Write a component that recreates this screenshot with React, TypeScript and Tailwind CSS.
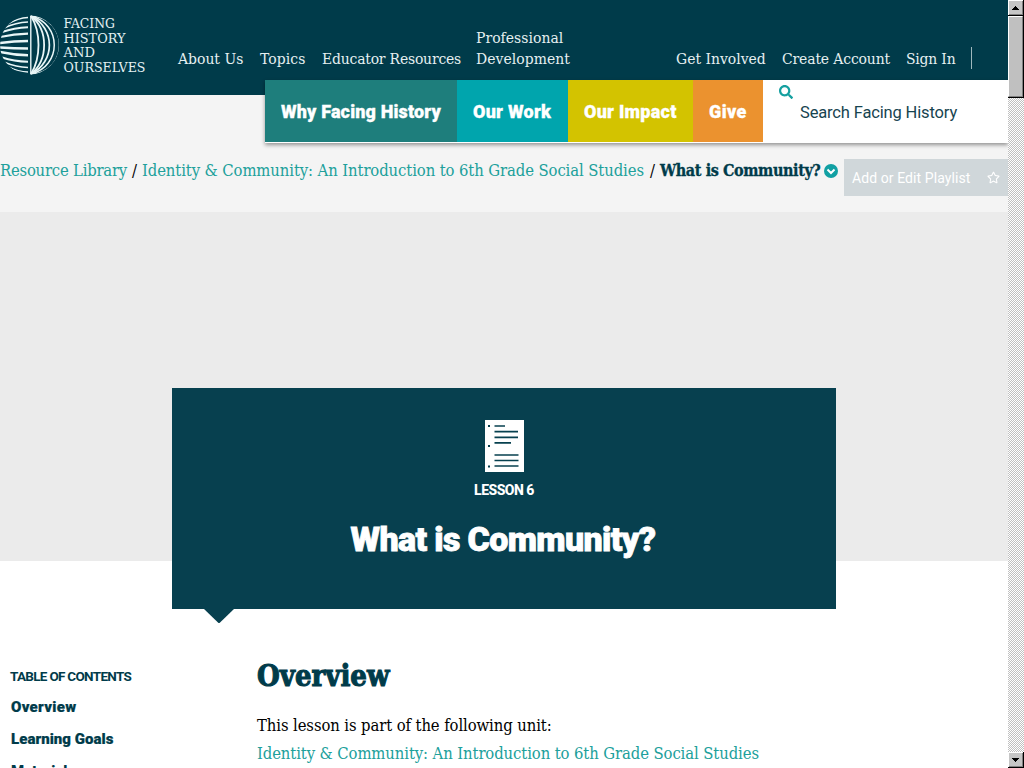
import React from "react";
import { FaSearch, FaRegStar } from "react-icons/fa";

const slab = "font-['DejaVu_Serif_Condensed','DejaVu_Serif',serif]";

function Logo() {
  return (
    <svg width="150" height="80" viewBox="0 0 150 80" className="block shrink-0">
      <defs>
        <clipPath id="globe"><circle cx="29.5" cy="45" r="29.5" /></clipPath>
        <clipPath id="west"><rect x="0" y="15" width="28" height="60" /></clipPath>
      </defs>
      <g clipPath="url(#globe)">
        <g clipPath="url(#west)" fill="none" stroke="#e9f6f7">
          <path strokeWidth="1.3" d="M28 17.5Q18 18 8 24" />
          <path strokeWidth="1.6" d="M28 22Q16 22.500 4 28" />
          <path strokeWidth="1.9" d="M28 27.300Q14 28 2 32" />
          <path strokeWidth="2.200" d="M28 33.700Q14 34 0 37" />
          <path strokeWidth="2.600" d="M28 41Q14 41 0 43" />
          <path strokeWidth="2.600" d="M28 48.500Q14 48.500 0 47.500" />
          <path strokeWidth="2.400" d="M28 55.300Q14 55 0 52" />
          <path strokeWidth="2" d="M28 61.800Q14 61.500 2 57.500" />
          <path strokeWidth="1.700" d="M28 67.500Q16 67 5 62.500" />
          <path strokeWidth="1.300" d="M28 72Q18 71.500 9 67" />
        </g>
        <g fill="none" stroke="#e9f6f7">
          <path strokeWidth="1.400" d="M30.800 15V75" />
          <path strokeWidth="1.800" d="M31 16C41 32 41 58 31 74" />
          <path strokeWidth="1.800" d="M31 16C48.500 30 48.500 60 31 74" />
          <path strokeWidth="1.700" d="M31 16C55.500 28 55.500 62 31 74" />
          <path strokeWidth="1.500" d="M31 16C62 24 62 66 31 74" />
          <path strokeWidth="1.500" d="M31 15.700C69 18 69 72 31 74.300" />
        </g>
      </g>
      <g fill="#e3f1f3" fontFamily="DejaVu Serif Condensed, DejaVu Serif, serif" fontSize="13">
        <text x="63.500" y="28" textLength="51.500" lengthAdjust="spacingAndGlyphs">FACING</text>
        <text x="63.500" y="43" textLength="62" lengthAdjust="spacingAndGlyphs">HISTORY</text>
        <text x="63.500" y="57" textLength="31.500" lengthAdjust="spacingAndGlyphs">AND</text>
        <text x="63.500" y="71.500" textLength="82" lengthAdjust="spacingAndGlyphs">OURSELVES</text>
      </g>
    </svg>
  );
}

function Header() {
  return (
    <header className="relative z-10 shrink-0">
      <div className="flex h-20 items-end bg-[#003b4a]">
        <Logo />
        <nav className={`flex grow items-end pb-[10px] pl-7 text-[15.5px] leading-[21px] whitespace-nowrap text-[#e6f0f1] ${slab}`}>
          <a className="w-[82px]">About Us</a>
          <a className="w-[62px] tracking-[0.1px]">Topics</a>
          <a className="w-[154px] tracking-[-0.19px]">Educator Resources</a>
          <a className="w-[200px] tracking-[0.05px]">Professional<br />Development</a>
          <a className="w-[106px]">Get Involved</a>
          <a className="w-[124px] tracking-[-0.13px]">Create Account</a>
          <a className="w-[65px] tracking-[-0.2px]">Sign In</a>
          <span className="mb-px h-[22px] w-px bg-[#9fb8bd]" />
        </nav>
      </div>
      <div className="flex h-[63px] items-start">
        <div className="h-[15px] w-[265px] bg-[#003b4a]" />
        <div className="flex h-[63px] grow bg-white text-[18px] leading-[63px] font-black tracking-[0.15px] whitespace-nowrap text-white shadow-[0_2px_4px_rgba(0,0,0,0.4)]">
          <a className="h-[62px] w-48 bg-[#1e7e7c] pl-4 [-webkit-text-stroke:0.3px_white]">Why Facing History</a>
          <a className="h-[62px] w-[111px] bg-[#00a5ad] pl-4 tracking-[0.25px] [-webkit-text-stroke:0.3px_white]">Our Work</a>
          <a className="h-[62px] w-[125px] bg-[#d3c300] pl-4 tracking-[0.25px] [-webkit-text-stroke:0.3px_white]">Our Impact</a>
          <a className="h-[62px] w-[70px] bg-[#eb922f] pl-4 tracking-[0.4px] [-webkit-text-stroke:0.3px_white]">Give</a>
          <div className="flex pl-4">
            <FaSearch className="mt-[5px] size-[14px] text-[#15a0a0]" />
            <span className="pl-[7px] text-[16.5px] leading-[65px] font-normal tracking-[-0.15px] text-[#174450]">Search Facing History</span>
          </div>
        </div>
      </div>
    </header>
  );
}

function Breadcrumbs() {
  return (
    <div className="flex h-[69px] shrink-0 items-start bg-[#f4f4f4] pt-4">
      <div className={`flex w-[844px] text-[16.5px] leading-[23px] whitespace-nowrap text-[#20a09b] ${slab}`}>
        <a className="w-[132px] tracking-[-0.22px]">Resource Library</a>
        <span className="w-[10px] text-black">/</span>
        <a className="w-[508px] tracking-[-0.1px]">Identity &amp; Community: An Introduction to 6th Grade Social Studies</a>
        <span className="w-[10px] text-black">/</span>
        <b className="w-[164px] text-[16px] font-bold tracking-[-0.4px] text-[#003b4a] [-webkit-text-stroke:0.3px_#003b4a]">What is Community?</b>
        <svg viewBox="0 0 14 14" className="mt-[5px] block size-[14px]">
          <circle cx="7" cy="7" r="7" fill="#11a0a3" />
          <path d="M3.500 5.500L7 9L10.500 5.500" fill="none" stroke="#fff" strokeWidth="2" />
        </svg>
      </div>
      <div className="flex h-[37px] grow items-center bg-[#d0d7da] pl-2 text-[14px] text-white">
        <span className="w-[135px] pt-[2px] tracking-[0.08px]">Add or Edit Playlist</span>
        <FaRegStar className="size-[13px]" />
      </div>
    </div>
  );
}

function LessonIcon() {
  return (
    <svg width="39" height="52" viewBox="0 0 39 52" className="block">
      <path fill="#fff" d="M0 0h39v52H0z" />
      <path stroke="#07404f" strokeWidth="1.700" d="M9.500 6H20M9.500 11.700H33M9.500 17.300H33M9.500 22.800H26M9.500 35H33.500M9.500 40.500H33.500M9.500 46H33.500" />
      <path fill="#07404f" d="M3 5h2v2H3zM3 25h2v2H3zM3 45.500h2v2H3z" />
    </svg>
  );
}

function Hero() {
  return (
    <section className="flex h-[411px] shrink-0 flex-col bg-[linear-gradient(#ebebeb_349px,#fff_349px)] px-[172px] pt-[176px]">
      <div className="flex h-[221px] shrink-0 flex-col items-center bg-[#07404f] pt-8 font-black text-white">
        <LessonIcon />
        <div className="mt-[10px] text-[14px] leading-4 font-extrabold tracking-[-0.5px]">LESSON 6</div>
        <h1 className="mt-[21px] mr-[2px] text-[34px] leading-[40px] tracking-[-0.65px] [-webkit-text-stroke:0.8px_white]">What is Community?</h1>
      </div>
      <svg width="30" height="15" viewBox="0 0 30 15" className="ml-8 block shrink-0">
        <path fill="#07404f" d="M0 0h30L15 14.500z" />
      </svg>
    </section>
  );
}

function Content() {
  return (
    <main className="flex min-h-0 grow bg-white text-[#003b4a]">
      <aside className="w-[257px] shrink-0 pt-[45px] pl-[10px]">
        <h2 className="text-[13.5px] leading-[16px] font-bold tracking-[-0.7px]">TABLE OF CONTENTS</h2>
        <ul className="mt-[7px] pl-px text-[15px] leading-8 font-black">
          <li className="tracking-[0.3px] [-webkit-text-stroke:0.2px_#003b4a]">Overview</li>
          <li className="tracking-[0.05px] [-webkit-text-stroke:0.2px_#003b4a]">Learning Goals</li>
          <li>Materials</li>
        </ul>
      </aside>
      <article className={slab}>
        <h2 className="mt-[33px] text-[29px] leading-[40px] font-bold [-webkit-text-stroke:1px_#003b4a]">Overview</h2>
        <p className="mt-4 text-[16.5px] leading-7 tracking-[-0.1px] whitespace-nowrap text-black">
          This lesson is part of the following unit:<br />
          <a className="text-[#20a09b]">Identity &amp; Community: An Introduction to 6th Grade Social Studies</a>
        </p>
      </article>
    </main>
  );
}

function ScrollButton({ d }: { d: string }) {
  return (
    <svg width="16" height="16" viewBox="0 0 16 16" className="block shrink-0" shapeRendering="crispEdges">
      <path fill="#000" d="M0 0h16v16H0z" />
      <path fill="#fff" d="M0 0h15v15H0z" />
      <path fill="#808080" d="M1 1h14v14H1z" />
      <path fill="#c6c6c6" d="M1 1h13v13H1z" />
      <path fill="#000" d={d} />
    </svg>
  );
}

function Scrollbar() {
  return (
    <div className="flex w-4 shrink-0 flex-col bg-[repeating-conic-gradient(#c0c0c0_0_25%,#fff_0_50%)] bg-[length:2px_2px]">
      <ScrollButton d="M7 6h1v1h1v1h1v1h1v1H4V9h1V8h1V7h1z" />
      <div className="h-[82px] border-r border-b border-black">
        <div className="h-full border-t border-r border-b border-l border-t-white border-r-[#808080] border-b-[#808080] border-l-white bg-[#c0c0c0]" />
      </div>
      <div className="grow" />
      <ScrollButton d="M4 6h7v1h-1v1H9v1H8v1H7V9H6V8H5V7H4z" />
    </div>
  );
}

export default function App() {
  return (
    <div className="flex h-[768px] w-[1024px] overflow-hidden font-['Roboto',sans-serif]">
      <div className="flex w-[1008px] flex-col overflow-hidden bg-[#f4f4f4]">
        <Header />
        <Breadcrumbs />
        <Hero />
        <Content />
      </div>
      <Scrollbar />
    </div>
  );
}
